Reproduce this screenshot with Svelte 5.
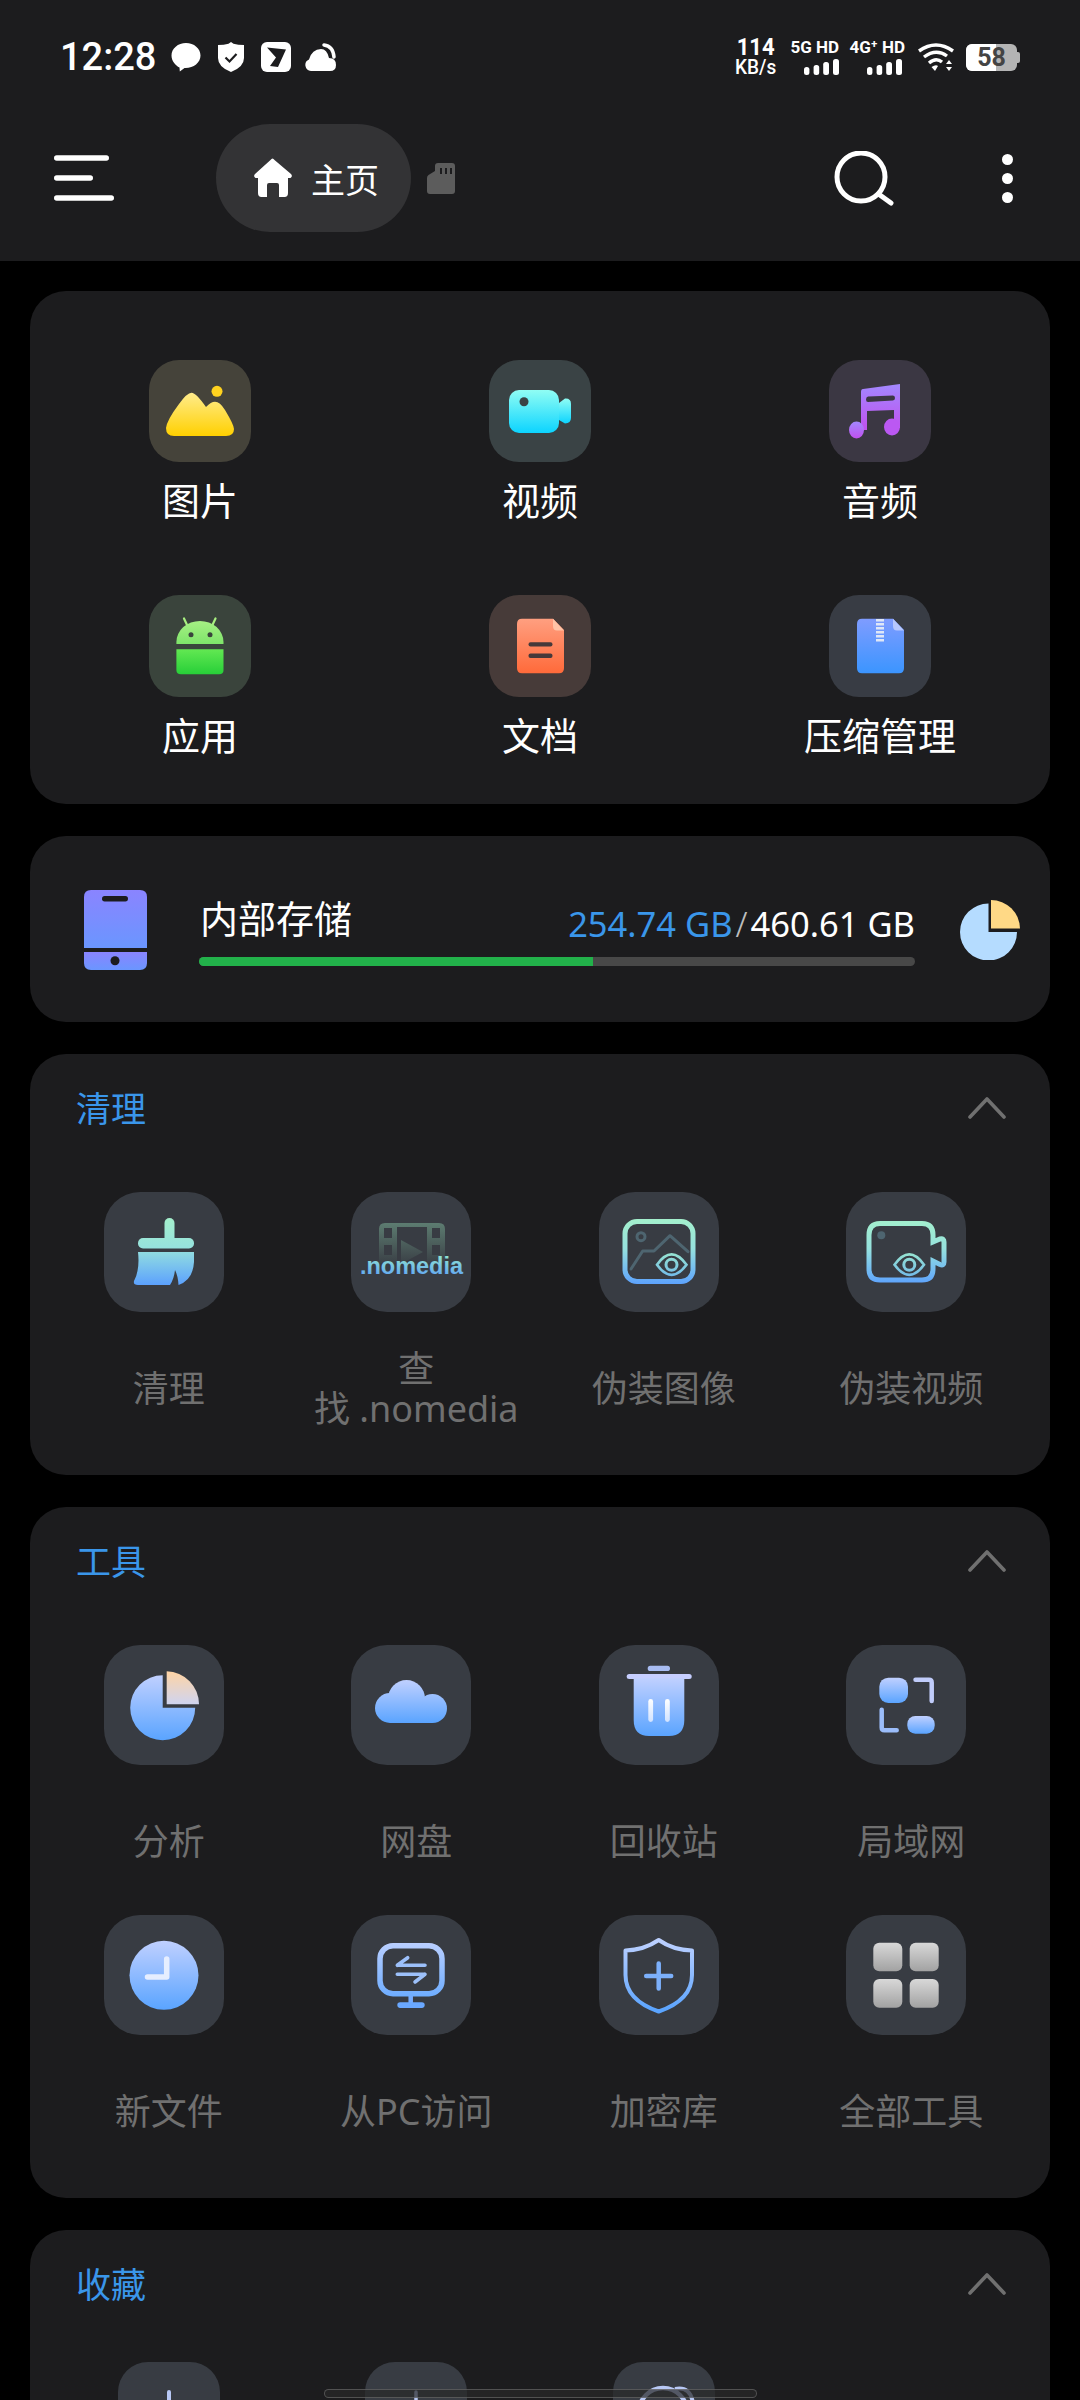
<script>
  const cleanTools = [
    { label: '清理', icon: broom },
    { label: '查\n找 .nomedia', icon: nomedia },
    { label: '伪装图像', icon: hiddenImage },
    { label: '伪装视频', icon: hiddenVideo }
  ];
  const allTools = [
    { label: '分析', icon: analyse },
    { label: '网盘', icon: cloud },
    { label: '回收站', icon: trash },
    { label: '局域网', icon: lan },
    { label: '新文件', icon: clock },
    { label: '从PC访问', icon: monitor },
    { label: '加密库', icon: vault },
    { label: '全部工具', icon: grid }
  ];
  const categories = [
    { label: '图片', bg: '#45433a', icon: picture },
    { label: '视频', bg: '#3a4345', icon: video },
    { label: '音频', bg: '#3b3743', icon: music },
    { label: '应用', bg: '#3a443c', icon: android },
    { label: '文档', bg: '#473b39', icon: doc },
    { label: '压缩管理', bg: '#383c44', icon: zip }
  ];
</script>

{#snippet picture()}
  <circle cx="68" cy="31.3" r="5.5" fill="#ffd21f" />
  <path fill="url(#sun)" d="M25 76Q17 76 17 68Q18 60 30 44Q38 32.7 42.6 32.7Q47 32.7 57 47Q62 41.7 66 41.7Q71 41.7 76 50Q85 65 85 69Q85 76 77 76Z" />
{/snippet}
{#snippet video()}
  <rect x="20" y="30" width="50" height="43" rx="10" fill="url(#aqua)" />
  <path fill="url(#aqua)" d="M70 43L76 38.5Q82 38 82 44V58Q82 63 76 63.5L70 60Z" />
  <ellipse cx="35" cy="41.7" rx="4.5" ry="4.5" fill="#3a4345" />
{/snippet}
{#snippet music()}
  <path fill="url(#violet)" fill-rule="evenodd" d="M34 29L71 24V68H65V50L38 51V70H32V32Q32 29 34 29ZM39 36.5Q37 37 37 39.5Q37 42 39 42L64 40.5Q66 40 66 38Q66 35.5 64 35.5Z" />
  <ellipse cx="27.5" cy="70" rx="7.5" ry="8.5" fill="url(#violet)" />
  <ellipse cx="63" cy="67" rx="8" ry="8.5" fill="#bb58f2" />
{/snippet}
{#snippet android()}
  <path d="M35 23.5L39 32M66.5 23.5L62.5 32" stroke="#a8f080" stroke-width="2.2" stroke-linecap="round" />
  <path fill="url(#leaf)" d="M27.4 49V47A23.5 21 0 0 1 74.5 47V49Z" />
  <circle cx="42" cy="39.7" r="2.5" fill="#3a443c" />
  <circle cx="61" cy="39.7" r="2.5" fill="#3a443c" />
  <path fill="url(#grass)" d="M27.4 54.3H74.5V75Q74.5 79.3 70 79.3H32Q27.4 79.3 27.4 75Z" />
{/snippet}
{#snippet doc()}
  <path fill="url(#coral)" d="M33 23.7H64L75 35V73Q75 78.3 70 78.3H33Q28 78.3 28 73V29Q28 23.7 33 23.7Z" />
  <path fill="#ffc3a6" d="M64 23.7L75 35.5H68Q64 35.5 64 31Z" />
  <rect x="39.5" y="47.2" width="24" height="4.4" rx="2" fill="#46393a" />
  <rect x="39.5" y="58.6" width="24" height="4.4" rx="2" fill="#46393a" />
{/snippet}
{#snippet zip()}
  <path fill="url(#azure)" d="M33 23.7H64L75 35V73Q75 78.3 70 78.3H33Q28 78.3 28 73V29Q28 23.7 33 23.7Z" />
  <path fill="#b6c8ff" d="M64 23.7L75 35.5H68Q64 35.5 64 31Z" />
  <path d="M51 24V48" stroke="#dfe7f7" stroke-width="8" stroke-dasharray="2.4 1.6" />
{/snippet}

{#snippet broom()}
  <g fill="url(#mintUser)">
    <rect x="60.5" y="26" width="10" height="26" rx="5" />
    <rect x="34" y="46" width="56" height="10.5" rx="5" />
    <path d="M34 60H90V70Q89 88 74.5 93Q74 84 71 78Q70 87 66 93H34Q29 93 30 89Q36 78 34 60Z" />
  </g>
{/snippet}
{#snippet nomedia()}
  <path fill="url(#filmFade)" fill-rule="evenodd" d="M34 31H88Q94 31 94 37V71H28V37Q28 31 34 31ZM33 36V46H41V36ZM81 36V46H89V36ZM33 53V63H41V53ZM81 53V63H89V53ZM46 35V71H76V35Z" />
  <path fill="url(#filmFade)" d="M50 48L72 60L50 72Z" />
  <text class="film-word" x="60.5" y="82" fill="url(#wordFill)" text-anchor="middle">.nomedia</text>
{/snippet}
{#snippet hiddenImage()}
  <rect x="26" y="29.5" width="68" height="60" rx="12" fill="none" stroke="url(#mintUser)" stroke-width="5" />
  <path d="M32 77L43.7 59H55L71 43.7L89 59.7" fill="none" stroke="#4e6570" stroke-width="3" stroke-linecap="round" stroke-linejoin="round" />
  <circle cx="42" cy="44.7" r="4" fill="none" stroke="#4e6570" stroke-width="3" />
  <path d="M58 72.7Q72.5 52 87.5 72.7Q72.5 93 58 72.7Z" fill="#383c43" stroke="url(#eyeUser)" stroke-width="2.6" />
  <circle cx="72.5" cy="72.7" r="5.5" fill="none" stroke="url(#eyeUser)" stroke-width="3" />
{/snippet}
{#snippet hiddenVideo()}
  <path d="M34 31.5H76Q87 31.5 87 43V50L94 47Q98 46 98 50V70Q98 74 94 72.5L87 69V77Q87 88 76 88H34Q23 88 23 77V43Q23 31.5 34 31.5Z" fill="none" stroke="url(#mintUser)" stroke-width="5" />
  <circle cx="35.3" cy="43.3" r="4" fill="#4e6570" />
  <path d="M48.5 72.7Q63.3 52 78 72.7Q63.3 93 48.5 72.7Z" fill="#383c43" stroke="url(#eyeUser)" stroke-width="2.6" />
  <circle cx="63.3" cy="72.7" r="5.5" fill="none" stroke="url(#eyeUser)" stroke-width="3" />
{/snippet}
{#snippet analyse()}
  <path fill="url(#sky)" d="M58.7 30.2V62.7H91.2A32.5 32.5 0 1 1 58.7 30.2Z" />
  <path fill="url(#peach)" d="M62.7 26.3A33 33 0 0 1 95 59.3H62.7Z" />
{/snippet}
{#snippet cloud()}
  <g fill="url(#cloudUser)">
    <circle cx="39" cy="63" r="15" />
    <circle cx="55.5" cy="53.5" r="18.5" />
    <circle cx="81.5" cy="63.5" r="14.5" />
    <rect x="39" y="55" width="42.5" height="23" />
  </g>
{/snippet}
{#snippet trash()}
  <rect x="48.7" y="20.7" width="22.3" height="5.3" rx="2.6" fill="#a8bcf2" />
  <rect x="27.7" y="29" width="65" height="5" rx="2.5" fill="#c6ceff" />
  <path fill="url(#sky)" d="M34.7 33H85.3V75Q85.3 91 70 91H50Q34.7 91 34.7 75Z" />
  <rect x="49.3" y="54" width="4.8" height="23" rx="2.4" fill="url(#barGlow)" />
  <rect x="66" y="54" width="4.8" height="23" rx="2.4" fill="url(#barGlow)" />
{/snippet}
{#snippet lan()}
  <rect x="33.3" y="32.7" width="28.7" height="25.3" rx="9" fill="url(#sky)" />
  <path d="M69.5 34.7H83Q85.7 34.7 85.7 37.4V56" fill="none" stroke="#c0ccfa" stroke-width="4.5" stroke-linecap="round" />
  <path d="M35.7 64.7V82.6Q35.7 85.3 38.4 85.3H50.7" fill="none" stroke="#9bbdfa" stroke-width="4.5" stroke-linecap="round" />
  <rect x="61.3" y="71" width="27.4" height="17.7" rx="8" fill="url(#sky)" />
{/snippet}
{#snippet clock()}
  <circle cx="60" cy="60.3" r="34.5" fill="url(#sky)" />
  <path d="M62.7 44V62H43.5" fill="none" stroke="#e6eeff" stroke-width="5.5" stroke-linecap="round" stroke-linejoin="round" />
{/snippet}
{#snippet monitor()}
  <rect x="29" y="30.7" width="62" height="48" rx="13" fill="none" stroke="url(#skyUser)" stroke-width="5.5" />
  <path d="M59.7 81V90" stroke="#75acff" stroke-width="4.5" />
  <rect x="46.3" y="87.3" width="27.4" height="5.6" rx="2.8" fill="#6aa8ff" />
  <path d="M46.3 50.3H74M46.3 50.3L56.7 42.7M46.3 59.3H74M74 59.3L64 67" fill="none" stroke="#9cc0fa" stroke-width="3.6" stroke-linecap="round" />
{/snippet}
{#snippet vault()}
  <path d="M59.7 25Q45 35 26.5 35.5V60Q26.5 85 59.7 96.5Q93 85 93 60V35.5Q74 35 59.7 25Z" fill="none" stroke="url(#skyUser)" stroke-width="4" stroke-linejoin="round" />
  <path d="M47.2 61H72.2M59.7 48.5V73.5" fill="none" stroke="#7cb0fb" stroke-width="4.5" stroke-linecap="round" />
{/snippet}
{#snippet grid()}
  <rect x="27.3" y="27.7" width="29" height="28.6" rx="6" fill="url(#silver)" />
  <rect x="63.7" y="27.7" width="29" height="28.6" rx="6" fill="url(#silver)" />
  <rect x="27.3" y="64" width="29" height="28.7" rx="6" fill="url(#silver)" />
  <rect x="63.7" y="64" width="29" height="28.7" rx="6" fill="url(#silver)" />
{/snippet}

{#snippet signal()}
  <svg viewBox="0 0 35 16" width="35" height="16">
    <g fill="#fff">
      <rect x="0" y="8" width="5.4" height="8" rx="2.5" />
      <rect x="9.6" y="6" width="5.6" height="10" rx="2.5" />
      <rect x="19.2" y="3" width="5.8" height="13" rx="2.5" />
      <rect x="29" y="0" width="6" height="16" rx="2.5" />
    </g>
  </svg>
{/snippet}

{#snippet toolCell(item)}
  <div class="cell">
    <div class="tile">
      <svg viewBox="0 0 120 120" width="120" height="120">{@render item.icon()}</svg>
    </div>
    <div class="cell-label">{item.label}</div>
  </div>
{/snippet}

{#snippet sectionHead(title)}
  <div class="section-head">
    <span>{title}</span>
    <svg class="chevron" viewBox="0 0 38 22" width="38" height="22">
      <path d="M2 20L19 2L36 20" fill="none" stroke="#707070" stroke-width="3.6" stroke-linecap="round" stroke-linejoin="round" />
    </svg>
  </div>
{/snippet}

<svg class="paint-defs" width="0" height="0" aria-hidden="true">
  <defs>
    <linearGradient id="sun" x1="0" y1="0" x2="0" y2="1"><stop offset="0" stop-color="#ffec8c" /><stop offset="1" stop-color="#ffd000" /></linearGradient>
    <linearGradient id="aqua" x1="0" y1="0" x2="0" y2="1"><stop offset="0" stop-color="#90fdf4" /><stop offset="1" stop-color="#0cd4ff" /></linearGradient>
    <linearGradient id="violet" x1="0" y1="0" x2="0" y2="1"><stop offset="0" stop-color="#a388ff" /><stop offset="1" stop-color="#c050ee" /></linearGradient>
    <linearGradient id="leaf" x1="0" y1="0" x2="0" y2="1"><stop offset="0" stop-color="#a6f084" /><stop offset="1" stop-color="#7ee46a" /></linearGradient>
    <linearGradient id="grass" x1="0" y1="0" x2="0" y2="1"><stop offset="0" stop-color="#62e852" /><stop offset="1" stop-color="#27cf38" /></linearGradient>
    <linearGradient id="coral" x1="0" y1="0" x2="0" y2="1"><stop offset="0" stop-color="#ff9f80" /><stop offset="1" stop-color="#ff6a3a" /></linearGradient>
    <linearGradient id="azure" x1="0" y1="0" x2="0" y2="1"><stop offset="0" stop-color="#7f9cff" /><stop offset="1" stop-color="#3b95ff" /></linearGradient>
    <linearGradient id="sky" x1="0" y1="0" x2="0" y2="1"><stop offset="0" stop-color="#c0d0ff" /><stop offset="1" stop-color="#5aa4ff" /></linearGradient>
    <linearGradient id="peach" x1="0" y1="0" x2="0" y2="1"><stop offset="0" stop-color="#ffd4a4" /><stop offset="1" stop-color="#cfd4f0" /></linearGradient>
    <linearGradient id="silver" x1="0" y1="0" x2="0" y2="1"><stop offset="0" stop-color="#d8d8d8" /><stop offset="1" stop-color="#a2a2a2" /></linearGradient>
    <linearGradient id="barGlow" x1="0" y1="0" x2="0" y2="1"><stop offset="0" stop-color="#ffffff" /><stop offset="1" stop-color="#d0e2ff" /></linearGradient>
    <linearGradient id="phoneFill" x1="0" y1="0" x2="0" y2="1"><stop offset="0" stop-color="#8a84ff" /><stop offset="1" stop-color="#6a96ff" /></linearGradient>
    <linearGradient id="mintUser" gradientUnits="userSpaceOnUse" x1="0" y1="26" x2="0" y2="94"><stop offset="0" stop-color="#a4f0cc" /><stop offset="0.45" stop-color="#96e2de" /><stop offset="1" stop-color="#5a9fff" /></linearGradient>
    <linearGradient id="eyeUser" gradientUnits="userSpaceOnUse" x1="0" y1="60" x2="0" y2="86"><stop offset="0" stop-color="#98e6d0" /><stop offset="1" stop-color="#70b8ea" /></linearGradient>
    <linearGradient id="skyUser" gradientUnits="userSpaceOnUse" x1="0" y1="26" x2="0" y2="96"><stop offset="0" stop-color="#bcd0ff" /><stop offset="1" stop-color="#5aa4ff" /></linearGradient>
    <linearGradient id="cloudUser" gradientUnits="userSpaceOnUse" x1="0" y1="35" x2="0" y2="78"><stop offset="0" stop-color="#c0d0ff" /><stop offset="1" stop-color="#5aa4ff" /></linearGradient>
    <linearGradient id="filmFade" gradientUnits="userSpaceOnUse" x1="0" y1="30" x2="0" y2="72"><stop offset="0" stop-color="#64897a" stop-opacity="0.85" /><stop offset="1" stop-color="#64897a" stop-opacity="0.05" /></linearGradient>
    <linearGradient id="wordFill" gradientUnits="userSpaceOnUse" x1="0" y1="64" x2="0" y2="84"><stop offset="0" stop-color="#8fe4d2" /><stop offset="1" stop-color="#62a6f2" /></linearGradient>
  </defs>
</svg>

<div class="screen">
  <header class="top">
    <div class="status">
      <div class="status-left">
        <span class="clock">12:28</span>
        <svg viewBox="0 0 30 30" width="30" height="30"><path fill="#fff" d="M15 1C7 1 0.5 6.5 0.5 13.5C0.5 19 4.5 23.5 8.5 25.5L8.8 29.5L13.5 26C22 26.5 29.5 21 29.5 13.5C29.5 6.5 23 1 15 1Z" /></svg>
        <svg class="shield" viewBox="0 0 26 30" width="26" height="30">
          <path fill="#fff" d="M13 0L15.5 1.8Q20 3 26 3V16Q26 25 13 30Q0 25 0 16V3Q6 3 10.5 1.8Z" />
          <path d="M7.5 15.5L11.5 19.5L18.5 12" fill="none" stroke="#1c1c1e" stroke-width="2.2" />
        </svg>
        <svg class="plane" viewBox="0 0 30 30" width="30" height="30">
          <rect width="30" height="30" rx="6" fill="#fff" />
          <path fill="#1c1c1e" d="M6 5.5L25 7.5L17 25L9 24L15 15.5Z" />
        </svg>
        <svg class="weather" viewBox="0 0 31 28" width="31" height="28">
          <path fill="#fff" d="M6 28A6 6 0 0 1 4 16.5Q7 6 16 6Q22 6 24 15Q31 15 31 22Q31 28 25 28Z" />
          <path d="M19 2Q28 3 29 14" fill="none" stroke="#fff" stroke-width="3.5" stroke-linecap="round" />
        </svg>
      </div>
      <div class="status-right">
        <div class="speed"><b>114</b><span>KB/s</span></div>
        <div class="net">
          <span>5G HD</span>
          {@render signal()}
        </div>
        <div class="net net-wide">
          <span>4G⁺ HD</span>
          {@render signal()}
        </div>
        <svg class="wifi" viewBox="0 0 37 30" width="37" height="30">
          <g fill="none" stroke="#fff" stroke-width="3.4">
            <path d="M1 9Q18 -3 35 9" />
            <path d="M6 15Q18 6 29 14" />
            <path d="M11 21Q18 15 24 20" />
          </g>
          <path fill="#fff" d="M13.5 25Q18 22 20 24L17 29ZM28 22L31 18L34 22ZM28 25H34L31 29Z" />
        </svg>
        <div class="battery">
          <div class="battery-fill"></div>
          <span>58</span>
        </div>
      </div>
    </div>
    <div class="toolbar">
      <svg class="menu" viewBox="0 0 60 46" width="60" height="46">
        <g stroke="#fff" stroke-width="5.4" stroke-linecap="round">
          <path d="M2.7 3H52.3M2.7 23H36.3M2.7 43H57.3" />
        </g>
      </svg>
      <div class="crumb">
        <svg viewBox="0 0 40 40" width="40" height="40"><path fill="#fff" d="M19.5 0.5Q20.5 0.5 21.5 2L38 16Q40 18.5 37.5 20H35V35Q35 39 31.5 39H26V27Q26 25 24 25H16Q14 25 14 27V39H8.5Q5 39 5 35V20H2.5Q0 18.5 2 16L17.5 2Q18.5 0.5 19.5 0.5Z" /></svg>
        <span>主页</span>
      </div>
      <svg class="sd" viewBox="0 0 28 31" width="28" height="31">
        <path fill="#5c5c5c" d="M11 0H25Q28 0 28 3V28Q28 31 25 31H3Q0 31 0 28V15Q0 13 1.5 12L8 8V3Q8 0 11 0Z" />
        <path d="M14 5V11M19 5V11M24 5V11" stroke="#1c1c1e" stroke-width="2" />
      </svg>
      <svg class="search" viewBox="0 0 60 56" width="60" height="56">
        <circle cx="27" cy="26" r="24" fill="none" stroke="#fff" stroke-width="5" />
        <path d="M44.5 43L57 52" stroke="#fff" stroke-width="5" stroke-linecap="round" />
      </svg>
      <div class="dots"><i></i><i></i><i></i></div>
    </div>
  </header>

  <main class="content">
    <section class="card categories">
      {#each categories as cat}
        <div class="cat">
          <div class="cat-tile" style:background={cat.bg}>
            <svg viewBox="0 0 102 102" width="102" height="102">{@render cat.icon()}</svg>
          </div>
          <div class="cat-label">{cat.label}</div>
        </div>
      {/each}
    </section>

    <section class="card storage">
      <svg class="phone" viewBox="0 0 63 80" width="63" height="80">
        <path fill="url(#phoneFill)" d="M7 0H56Q63 0 63 7V58H0V7Q0 0 7 0Z" />
        <path fill="url(#phoneFill)" d="M0 62H63V73Q63 80 56 80H7Q0 80 0 73Z" />
        <rect x="18" y="6" width="26" height="5.4" rx="2.7" fill="#1c1c1e" />
        <circle cx="31" cy="70.7" r="4.5" fill="#1c1c1e" />
      </svg>
      <div class="storage-info">
        <div class="storage-row">
          <span class="storage-title">内部存储</span>
          <span class="storage-size"><em>254.74 GB</em><u>/</u>460.61 GB</span>
        </div>
        <div class="bar"><div class="bar-used" style:width="55%"></div></div>
      </div>
      <svg class="usage" viewBox="0 0 60 60" width="60" height="60">
        <path fill="#b5dcff" d="M28.5 3.5V32H57A28.5 28.5 0 1 1 28.5 3.5Z" />
        <path fill="#ffd986" d="M31 0A29 29 0 0 1 60 28.5H31Z" />
      </svg>
    </section>

    <section class="card">
      {@render sectionHead('清理')}
      <div class="tools">
        {#each cleanTools as item}{@render toolCell(item)}{/each}
      </div>
    </section>

    <section class="card">
      {@render sectionHead('工具')}
      <div class="tools">
        {#each allTools as item}{@render toolCell(item)}{/each}
      </div>
    </section>

    <section class="card favourites">
      {@render sectionHead('收藏')}
      <div class="tools fav-row">
        <div class="fav-tile"><svg viewBox="0 0 102 102" width="102" height="102"><path d="M51 30V72M30 51H72" stroke="#b8c8f5" stroke-width="4" stroke-linecap="round" /></svg></div>
        <div class="fav-tile"><svg viewBox="0 0 102 102" width="102" height="102"><path d="M51 30V70" stroke="#b8c8f5" stroke-width="3.5" stroke-linecap="round" /></svg></div>
        <div class="fav-tile"><svg viewBox="0 0 102 102" width="102" height="102"><circle cx="50" cy="50" r="24" fill="none" stroke="#b8c8f5" stroke-width="4.5" /><path d="M62 27Q78 24 80 42" fill="none" stroke="#b8c8f5" stroke-width="4" /></svg></div>
      </div>
    </section>
  </main>

  <div class="gesture-bar"></div>
</div>

<style>
  :global(body) {
    margin: 0;
    background: #000;
  }

  .paint-defs {
    position: absolute;
  }

  .screen {
    position: relative;
    width: 1080px;
    height: 2400px;
    overflow: hidden;
    background: #000;
    font-family: "Noto Sans", "Noto Sans CJK SC", sans-serif;
    color: #fff;
  }

  .top {
    height: 261px;
    background: #1c1c1e;
  }

  .status {
    display: flex;
    justify-content: space-between;
    align-items: center;
    height: 114px;
    padding: 0 60px;
    font-family: Roboto, sans-serif;
  }

  .status-left,
  .status-right {
    display: flex;
    align-items: center;
  }

  .clock {
    width: 111px;
    font-size: 38px;
    font-weight: 500;
    line-height: 40px;
  }

  .shield { margin-left: 17px; }
  .plane { margin-left: 17px; }
  .weather { margin-left: 14px; }

  .speed {
    display: flex;
    flex-direction: column;
    align-items: center;
    width: 44px;
    line-height: 20px;
  }

  .speed b {
    font-size: 24px;
    font-weight: 700;
    transform: scaleX(0.92);
  }

  .speed span {
    font-size: 20px;
    font-weight: 500;
    white-space: nowrap;
    transform: scaleX(0.95);
  }

  .net {
    display: flex;
    flex-direction: column;
    align-items: flex-end;
    width: 48px;
    margin: -2px 0 0 13px;
    font-size: 17px;
    font-weight: 700;
    line-height: 18px;
    white-space: nowrap;
  }

  .net svg { margin-top: 3px; }
  .net-wide { width: 56px; margin-left: 10px; }
  .net-wide svg { margin-right: 3px; }

  .wifi { margin-left: 13px; }

  .battery {
    position: relative;
    display: flex;
    justify-content: center;
    align-items: center;
    width: 51px;
    height: 27px;
    margin: 0 3px 0 11px;
    border-radius: 6px;
    background: #b4b4b4;
    color: #444;
    font-size: 25px;
    font-weight: 700;
  }

  .battery::after {
    content: "";
    position: absolute;
    right: -3px;
    top: 8px;
    width: 3px;
    height: 11px;
    border-radius: 0 2px 2px 0;
    background: #b4b4b4;
  }

  .battery-fill {
    position: absolute;
    inset: 0 auto 0 0;
    width: 30px;
    border-radius: 6px 0 0 6px;
    background: #fff;
  }

  .battery span { position: relative; }

  .toolbar {
    display: flex;
    align-items: center;
    height: 128px;
  }

  .menu { margin-left: 54px; }

  .crumb {
    display: flex;
    align-items: center;
    gap: 18px;
    width: 195px;
    height: 108px;
    box-sizing: border-box;
    margin-left: 102px;
    padding-left: 37px;
    border-radius: 54px;
    background: #333335;
    font-size: 34px;
  }

  .sd { margin-left: 16px; }
  .search { margin-left: 379px; margin-top: 2px; }

  .dots {
    display: flex;
    flex-direction: column;
    gap: 8px;
    margin-left: 108px;
  }

  .dots i {
    width: 11px;
    height: 11px;
    border-radius: 50%;
    background: #fff;
  }

  .content {
    display: flex;
    flex-direction: column;
    gap: 32px;
    padding: 30px;
  }

  .card {
    border-radius: 36px;
    background: #1c1c1e;
  }

  .categories {
    display: grid;
    grid-template-columns: repeat(3, 1fr);
    row-gap: 70px;
    padding: 69px 0 44px;
  }

  .cat {
    display: flex;
    flex-direction: column;
    align-items: center;
  }

  .cat-tile {
    width: 102px;
    height: 102px;
    border-radius: 30px;
  }

  .cat-tile svg,
  .tile svg,
  .fav-tile svg {
    display: block;
  }

  .cat-label {
    margin-top: 13px;
    font-size: 38px;
    line-height: 50px;
  }

  .storage {
    display: flex;
    align-items: center;
    height: 186px;
    box-sizing: border-box;
    padding: 2px 30px 0 54px;
  }

  .storage-info {
    width: 716px;
    margin: 0 45px 0 52px;
  }

  .storage-row {
    position: relative;
    display: flex;
    justify-content: space-between;
    align-items: center;
    height: 50px;
    margin-bottom: 12px;
  }

  .storage-title {
    margin: 0 0 6px 1px;
    font-size: 38px;
  }

  .storage-size {
    margin-top: 8px;
    font-size: 34.5px;
  }

  .storage-size em {
    font-style: normal;
    color: #3a96ea;
  }

  .storage-size u {
    margin: 0 3px;
    text-decoration: none;
    font-weight: 300;
    color: #bdbdbd;
  }

  .bar {
    height: 9px;
    border-radius: 5px;
    background: #484848;
    overflow: hidden;
  }

  .bar-used {
    height: 100%;
    background: #22b14a;
  }

  .section-head {
    display: flex;
    justify-content: space-between;
    align-items: center;
    height: 110px;
    padding: 0 44px 0 46px;
    font-size: 35px;
    color: #3a96ea;
  }

  .section-head span { margin-bottom: 6px; }
  .chevron { margin-bottom: 2px; }

  .tools {
    display: grid;
    grid-template-columns: repeat(4, 1fr);
    row-gap: 32px;
    padding: 28px 15px 45px;
  }

  .cell {
    display: flex;
    flex-direction: column;
    align-items: center;
  }

  .tile {
    width: 120px;
    height: 120px;
    margin-right: 10px;
    border-radius: 36px;
    background: #383c43;
  }

  .film-word {
    font-family: "Liberation Sans", sans-serif;
    font-size: 23.5px;
    font-weight: 700;
  }

  .cell-label {
    display: flex;
    align-items: center;
    justify-content: center;
    height: 81px;
    box-sizing: border-box;
    margin-top: 37px;
    padding-bottom: 2px;
    font-size: 36px;
    line-height: 40px;
    text-align: center;
    white-space: pre-line;
    color: #707070;
  }

  .favourites .tools { padding-top: 22px; }

  .fav-tile {
    justify-self: center;
    width: 102px;
    height: 102px;
    border-radius: 30px;
    background: #383c43;
  }

  .gesture-bar {
    position: absolute;
    left: 324px;
    top: 2389px;
    width: 433px;
    height: 9px;
    box-sizing: border-box;
    border: 1.5px solid rgba(150, 150, 150, 0.4);
    border-radius: 5px;
    background: rgba(40, 40, 40, 0.7);
  }
</style>
